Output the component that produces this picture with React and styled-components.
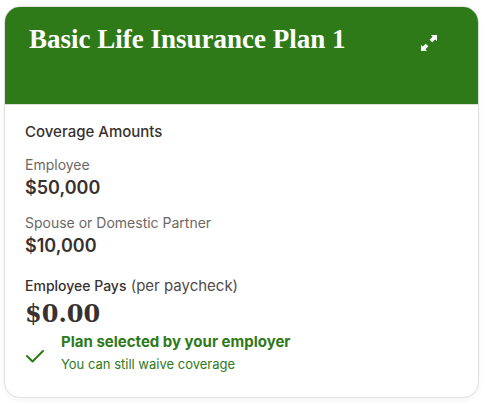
import React from "react";
import styled, { createGlobalStyle } from "styled-components";

const GlobalStyle = createGlobalStyle`
  *, *::before, *::after { box-sizing: border-box; }
  body {
    margin: 0;
    background: #ffffff;
    color: #38312f;
    font-family: Inter, "Liberation Sans", sans-serif;
  }
`;

const Page = styled.main`
  padding: 6px 6px 8px 4px;
`;

const Card = styled.article`
  border: 1px solid #e0e0dc;
  border-radius: 16px;
  overflow: hidden;
  background: #ffffff;
  box-shadow: 0 2px 4px 1px rgba(0, 0, 0, 0.04);
`;

const Header = styled.header`
  display: flex;
  align-items: flex-start;
  justify-content: space-between;
  min-height: 98px;
  padding: 16px 33px 16px 24px;
  border-bottom: 1px solid #dcdfd7;
  background: #2e7a18;
  background-clip: padding-box;
  color: #ffffff;
`;

const Title = styled.h2`
  margin: 0;
  font: 700 27px/32px "Liberation Serif", serif;
`;

const ExpandButton = styled.button`
  display: grid;
  place-items: center;
  width: 32px;
  height: 32px;
  margin-top: 4px;
  padding: 0;
  border: 0;
  background: transparent;
  color: inherit;
  cursor: pointer;
`;

const Body = styled.div`
  padding: 16px 20px 23px;
`;

const SectionTitle = styled.h3`
  margin: 0 0 12px;
  font-size: 15px;
  font-weight: 500;
  line-height: 22px;
`;

const Coverages = styled.dl`
  display: flex;
  flex-direction: column;
  gap: 12px;
  margin: 0 0 16px;
`;

const CoverageLabel = styled.dt`
  color: #6c6866;
  font-size: 14px;
  line-height: 20px;
`;

const CoverageValue = styled.dd`
  margin: 0;
  font-size: 18px;
  font-weight: 600;
  line-height: 26px;
`;

const CostLabel = styled.div`
  color: #504a48;
  font-size: 15px;
  line-height: 22px;
`;

const CostName = styled.span`
  color: #38312f;
  font-size: 14px;
  font-weight: 500;
`;

const Cost = styled.div`
  font: 700 24px/33px "DejaVu Serif", serif;
`;

const Status = styled.div`
  display: flex;
  align-items: center;
  gap: 16px;
  color: #2e7a18;
`;

const StatusTitle = styled.div`
  font-size: 15px;
  font-weight: 700;
  line-height: 24px;
`;

const StatusNote = styled.div`
  font-size: 13px;
  line-height: 20px;
`;

const CheckIcon = styled.svg`
  flex: none;
  margin-top: 8px;
`;

const coverages = [
  { label: "Employee", value: "$50,000" },
  { label: "Spouse or Domestic Partner", value: "$10,000" },
];

export default function App() {
  return (
    <>
      <GlobalStyle />
      <Page>
        <Card>
          <Header>
            <Title>Basic Life Insurance Plan 1</Title>
            <ExpandButton type="button" aria-label="Expand plan details">
              <svg width="16" height="16" viewBox="0 0 16 16" fill="currentColor" aria-hidden="true">
                <path d="M10 0H16V6L14.2 4.4L11.2 7.2L8.6 4.8L11.6 1.8Z" />
                <path d="M6 16H0V10L1.8 11.6L4.8 8.8L7.4 11.2L4.4 14.2Z" />
              </svg>
            </ExpandButton>
          </Header>
          <Body>
            <SectionTitle>Coverage Amounts</SectionTitle>
            <Coverages>
              {coverages.map(({ label, value }) => (
                <div key={label}>
                  <CoverageLabel>{label}</CoverageLabel>
                  <CoverageValue>{value}</CoverageValue>
                </div>
              ))}
            </Coverages>
            <CostLabel>
              <CostName>Employee Pays</CostName> (per paycheck)
            </CostLabel>
            <Cost>$0.00</Cost>
            <Status>
              <CheckIcon width="20" height="20" viewBox="0 0 20 20" fill="none" stroke="currentColor" strokeWidth="2" strokeLinecap="round" strokeLinejoin="round" aria-hidden="true">
                <path d="M2 10L7.5 15.5L18 5" />
              </CheckIcon>
              <div>
                <StatusTitle>Plan selected by your employer</StatusTitle>
                <StatusNote>You can still waive coverage</StatusNote>
              </div>
            </Status>
          </Body>
        </Card>
      </Page>
    </>
  );
}
